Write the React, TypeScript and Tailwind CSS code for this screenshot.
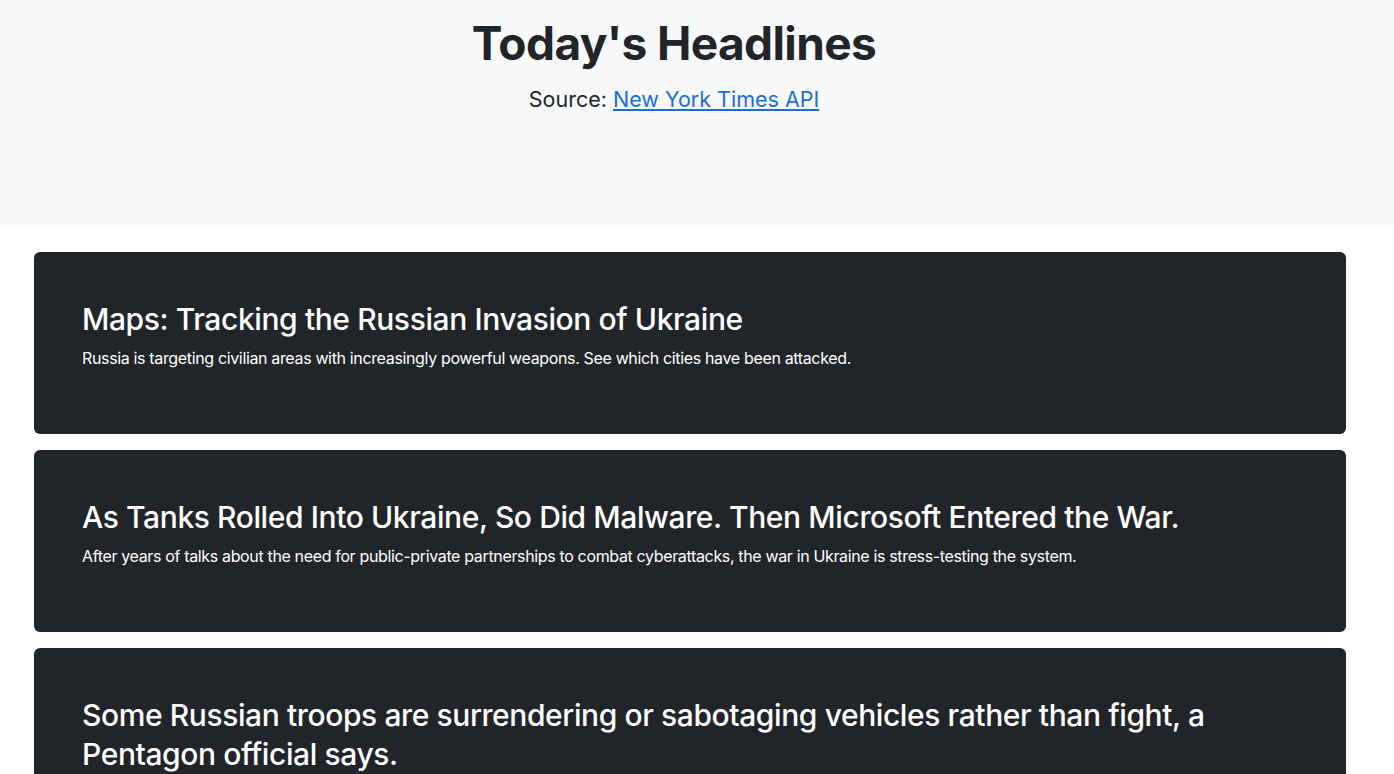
import React from "react";

const articles = [
  {
    title: "Maps: Tracking the Russian Invasion of Ukraine",
    abstract:
      "Russia is targeting civilian areas with increasingly powerful weapons. See which cities have been attacked.",
  },
  {
    title: "As Tanks Rolled Into Ukraine, So Did Malware. Then Microsoft Entered the War.",
    abstract:
      "After years of talks about the need for public-private partnerships to combat cyberattacks, the war in Ukraine is stress-testing the system.",
  },
  {
    title: "Some Russian troops are surrendering or sabotaging vehicles rather than fight, a Pentagon official says.",
    abstract:
      "The official said U.S. intelligence showed that morale among some Russian units was low.",
  },
];

export default function App() {
  return (
    <div className="min-h-screen bg-white text-[#212529]" style={{ fontFamily: "Inter, 'Noto Sans', sans-serif" }}>
      <header className="bg-[#f8f9fa] h-[228px] pt-[16px]">
        <div className="w-[1348px] flex flex-col items-center">
          <h1 className="text-[46px] font-bold leading-[1.2] tracking-[-0.6px]">Today's Headlines</h1>
          <p className="mt-[12px] text-[21.5px] leading-[1.5]">
            Source:{" "}
            <a href="#" className="text-[#1a6dd8] underline">
              New York Times API
            </a>
          </p>
        </div>
      </header>
      <main className="ml-[34px] w-[1312px] mt-[24px] flex flex-col gap-4 pb-6">
        {articles.map((a) => (
          <div key={a.title} className="bg-[#212529] rounded-md px-12 pt-12 pb-16 text-white">
            <h2 className="text-[30px] font-medium leading-[39px] tracking-[-0.4px] mb-[7px]">{a.title}</h2>
            <p className="text-[16px] leading-[24px] tracking-[-0.35px]">{a.abstract}</p>
          </div>
        ))}
      </main>
    </div>
  );
}
